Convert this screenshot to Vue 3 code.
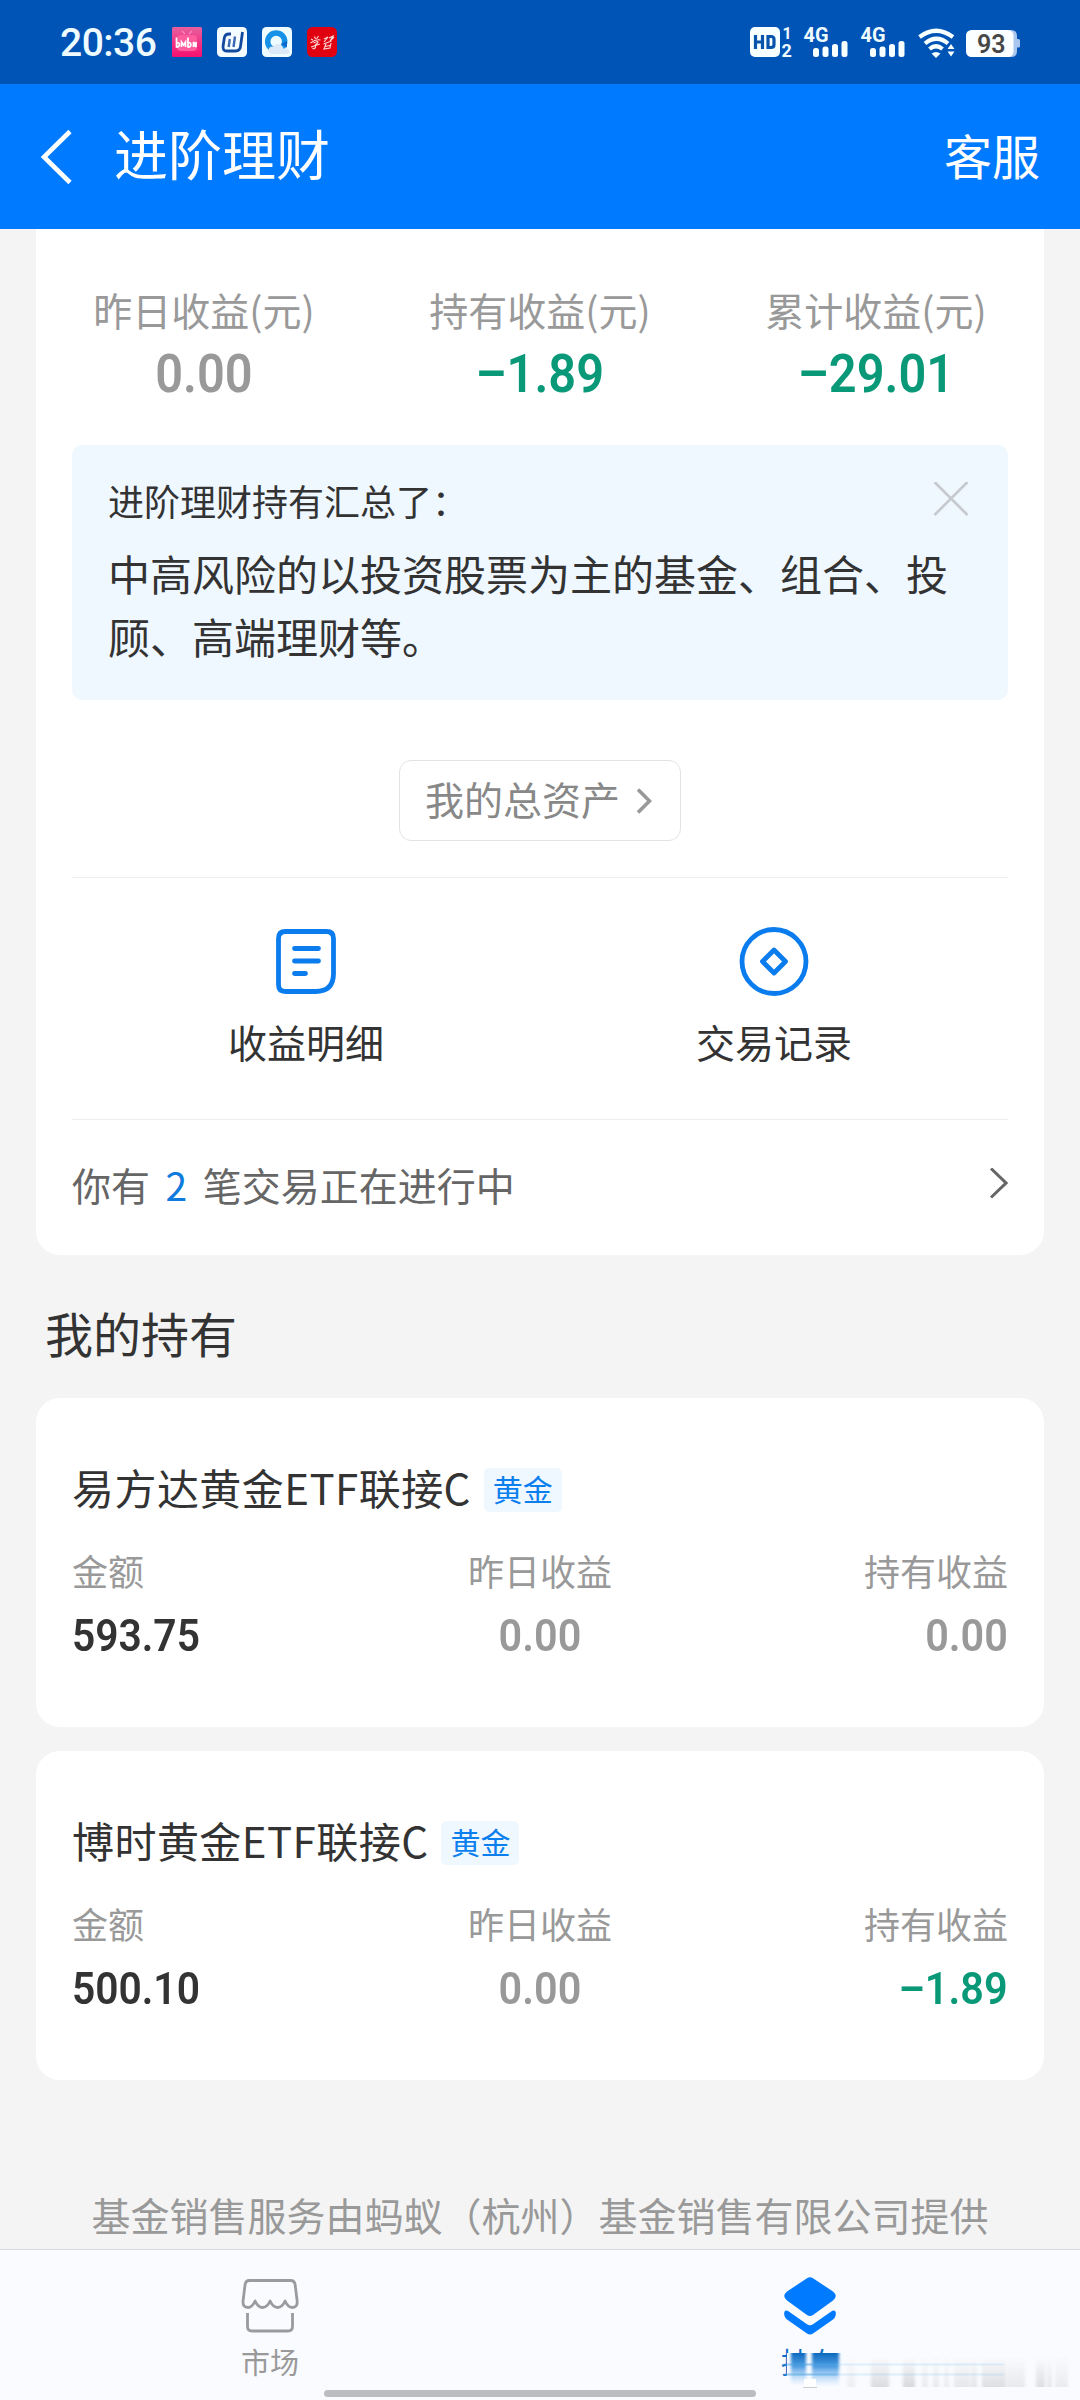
<script setup>
const stats = [
  { label: '昨日收益(元)', value: '0.00', tone: 'flat' },
  { label: '持有收益(元)', value: '–1.89', tone: 'down' },
  { label: '累计收益(元)', value: '–29.01', tone: 'down' },
]

const funds = [
  {
    name: '易方达黄金ETF联接C',
    tag: '黄金',
    cells: [
      { label: '金额', value: '593.75', tone: 'strong' },
      { label: '昨日收益', value: '0.00', tone: 'flat' },
      { label: '持有收益', value: '0.00', tone: 'flat' },
    ],
  },
  {
    name: '博时黄金ETF联接C',
    tag: '黄金',
    cells: [
      { label: '金额', value: '500.10', tone: 'strong' },
      { label: '昨日收益', value: '0.00', tone: 'flat' },
      { label: '持有收益', value: '–1.89', tone: 'down' },
    ],
  },
]

// Soft grey columns of the smudge: x, width, opacity
const smears = [
  [67, 8, 0.1], [91, 18, 0.24], [123, 12, 0.26], [142, 6, 0.12], [153, 6, 0.14],
  [164, 5, 0.12], [174, 16, 0.15], [191, 6, 0.17], [202, 24, 0.22], [227, 18, 0.14],
  [256, 9, 0.22], [267, 5, 0.16], [275, 13, 0.12],
]
</script>

<template>
  <div class="page">
    <div class="status">
      <span class="clock">20:36</span>
      <div class="apps">
        <svg width="30" height="30" viewBox="0 0 30 30">
          <defs>
            <linearGradient id="pink" x1="0" y1="0" x2="0" y2="1">
              <stop offset="0" stop-color="#e85f9e" /><stop offset="1" stop-color="#f5106f" />
            </linearGradient>
          </defs>
          <rect width="30" height="30" rx="1.500" fill="url(#pink)" />
          <path d="M10 4l3 3M20 4l-3 3" stroke="#ff86b8" stroke-width="1.400" />
          <rect x="5" y="8" width="20" height="16" rx="4" fill="#ff5c9d" />
          <path d="M4.500 10.500v9.500c3.500 .5 4-4.500 .5-4.500M9.500 20v-5l2 3 2-3v5M16 10.500v9.500c3.500 .5 4-4.500 .5-4.500M21.500 20v-5l2.500 5v-5" fill="none" stroke="#fff" stroke-width="1.700" />
        </svg>
        <svg width="30" height="30" viewBox="0 0 30 30">
          <rect width="30" height="30" rx="4.500" fill="#f4fcff" />
          <path d="M14 7h-2q-4 0-4.700 4l-1.200 8q-.6 5 3.500 5h9q4.200 0 4.900-4.500l2-14.500" fill="none" stroke="#134a9e" stroke-width="2.800" />
          <path d="M12.800 12l-1.100 8M18 9.500l-1.500 10.500" stroke="#3a68b4" stroke-width="2.400" />
        </svg>
        <svg width="30" height="30" viewBox="0 0 30 30">
          <rect width="30" height="30" rx="4.500" fill="#effcff" />
          <circle cx="14.200" cy="14.500" r="8.500" fill="none" stroke="#1592e6" stroke-width="5.500" />
          <path d="M19 17l6-3v6.500z" fill="#0868cc" />
          <path d="M10 27q-4-1-3.500-4.500 1-3.500 5-3 3-4.500 7.500-1.500 2 1.500 2.500 3.500 5-.5 6 3 0 2.500-3 2.500z" fill="#dce9f7" />
        </svg>
        <svg width="30" height="30" viewBox="0 0 30 30">
          <rect width="30" height="30" rx="5.500" fill="#e00010" />
          <path d="M4 12l2 1M7.500 9.500l1 2.500M11.500 9l-2 3M3.500 16q5-4 10-3M6.500 16q6-3 4 0-3 2-2 4-1 3-3 1M4 20l9-3M17 12l4-2-4 5M22 11l4-2-3 5 4-4M16.500 17l8-3M19 17l-2 5 6-1 1-5M18 19.500l5-1" fill="none" stroke="#ffd9d5" stroke-width="1.100" />
        </svg>
      </div>
      <svg class="signals" width="272" height="52" viewBox="748 16 272 52">
        <rect x="750" y="27" width="30" height="30" rx="5" fill="#f8ffff" />
        <path d="M755.500 35v14M762.500 35v14M756 42h6.500M768 36.500v11h3q3 0 3-3v-5q0-3-3-3z" fill="none" stroke="#0854ac" stroke-width="3.200" />
        <g fill="#eefcff" class="mini">
          <text x="782.500" y="39" font-size="16">1</text>
          <text x="781.500" y="57" font-size="18">2</text>
          <text x="803.500" y="42" font-size="19.500" textLength="25" lengthAdjust="spacingAndGlyphs">4G</text>
          <text x="860.500" y="42" font-size="19.500" textLength="25" lengthAdjust="spacingAndGlyphs">4G</text>
        </g>
        <g v-for="o in [0, 57]" :key="o" fill="#f8ffff">
          <rect :x="813 + o" y="48" width="6" height="9" rx="2.500" />
          <rect :x="822.500 + o" y="46.500" width="6" height="10.500" rx="2.500" />
          <rect :x="832 + o" y="44" width="6" height="13" rx="2.500" />
          <rect :x="841.500 + o" y="41" width="6" height="16" rx="2.500" />
        </g>
        <path d="M919.500 37q16.500-12.500 33.500 0M925 43.500q11.500-9.500 23 0M929.500 49q6.500-5.500 13 0" fill="none" stroke="#f8ffff" stroke-width="4.200" />
        <path d="M931.500 53.500q4.500-3.200 9 0l-4.500 4.500z" fill="#f8ffff" />
        <path d="M951 44l3.500 5h-7zM951 56.500l3.500-5h-7z" fill="#f8ffff" />
        <path d="M1008 30h3q6 0 6 6v3h1.500q1.500 0 1.500 1.500v5.500q0 1.500-1.500 1.500h-1.500v3.500q0 6-6 6h-3z" fill="#a9c6ee" />
        <rect x="966" y="30" width="47.500" height="27" rx="5.500" fill="#fbffff" />
        <text class="level" x="977" y="52.500" font-size="25" fill="#474747">93</text>
      </svg>
    </div>

    <header class="nav">
      <svg class="back" width="34" height="60" viewBox="0 0 34 60">
        <path d="M32 4.500L6 30 32 55.500" fill="none" stroke="#fff" stroke-width="4.600" />
      </svg>
      <h1>进阶理财</h1>
      <span class="service">客服</span>
    </header>

    <section class="summary">
      <div class="stats">
        <div v-for="s in stats" :key="s.label" class="stat">
          <span class="label">{{ s.label }}</span>
          <span class="num" :class="s.tone">{{ s.value }}</span>
        </div>
      </div>

      <div class="notice">
        <div class="notice-head">
          <span>进阶理财持有汇总了：</span>
          <svg width="36" height="36" viewBox="0 0 36 36">
            <path d="M1.500 0l33 33M34.500 0l-33 33" stroke="#c6cacf" stroke-width="2.600" />
          </svg>
        </div>
        <p>中高风险的以投资股票为主的基金、组合、投顾、高端理财等。</p>
      </div>

      <div class="assets">
        <span>我的总资产</span>
        <svg width="16" height="26" viewBox="0 0 16 26">
          <path d="M2 1.500L13.500 13 2 24.500" fill="none" stroke="#999" stroke-width="3.600" />
        </svg>
      </div>

      <div class="shortcuts">
        <div class="shortcut">
          <svg width="72" height="72" viewBox="0 0 72 72">
            <g fill="none" stroke="#0a7cee" stroke-width="4.800">
              <path d="M15.500 5.500h41q7 0 7 7v35q0 18-18 18h-30q-7 0-7-7v-46q0-7 7-7z" />
              <path d="M24.500 22.500h24M24.500 35h24M24.500 47.500h11" stroke-linecap="round" />
            </g>
          </svg>
          <span>收益明细</span>
        </div>
        <div class="shortcut">
          <svg width="72" height="72" viewBox="0 0 72 72">
            <circle cx="36" cy="35.500" r="32" fill="none" stroke="#0a7cee" stroke-width="4.800" />
            <path d="M36 24L47.500 35.500 36 47 24.500 35.500z" fill="none" stroke="#0a7cee" stroke-width="4.800" stroke-linejoin="round" />
          </svg>
          <span>交易记录</span>
        </div>
      </div>

      <div class="pending">
        <span>你有<b>2</b>笔交易正在进行中</span>
        <svg width="19" height="32" viewBox="0 0 19 32">
          <path d="M2 0.500L17 15 2 29.500" fill="none" stroke="#666" stroke-width="3" />
        </svg>
      </div>
    </section>

    <h2>我的持有</h2>

    <section v-for="f in funds" :key="f.name" class="fund">
      <div class="fund-head">
        <h3>{{ f.name }}</h3>
        <span class="tag">{{ f.tag }}</span>
      </div>
      <div class="cells">
        <div v-for="c in f.cells" :key="c.label" class="cell">
          <span class="label">{{ c.label }}</span>
          <span class="num" :class="c.tone">{{ c.value }}</span>
        </div>
      </div>
    </section>

    <p class="provider">基金销售服务由蚂蚁（杭州）基金销售有限公司提供</p>

    <nav class="tabs">
      <div class="tab">
        <svg width="60" height="60" viewBox="0 0 60 60">
          <g fill="none" stroke="#999b9f" stroke-width="2.800" stroke-linejoin="round">
            <path d="M9.500 4.500h41q4 0 4.600 4l2 16q.8 7-5 7-4 0-7-6.500-3 6.500-7.500 6.500t-7.500-6.500q-3 6.500-7.500 6.500t-7.500-6.500q-3 6.500-7 6.500-5.800 0-5-7l2-16q.6-4 4.400-4z" />
            <path d="M7.500 37v13.500q0 4.500 4.500 4.500h36q4.500 0 4.500-4.500V37" />
          </g>
        </svg>
        <span>市场</span>
      </div>
      <div class="tab active">
        <svg width="60" height="60" viewBox="0 0 60 60">
          <g fill="#007aff">
            <path d="M27 2.200q3-2 6 0l20 13.300q5.500 4.500 0 9l-20 14.500q-3 2-6 0l-20-14.500q-5.500-4.500 0-9z" />
            <path d="M4.300 36q1.500-2.500 4.500-.5l18.200 12.700q3 2 6 0l18.200-12.700q3-2 4.500.5 .8 5-2.700 7.500l-20 14q-3 2-6 0l-20-14q-3.500-2.500-2.700-7.500z" />
          </g>
        </svg>
        <span>持有</span>
        <svg class="smudge" width="290" height="40" viewBox="0 0 290 40">
          <defs>
            <linearGradient id="fadeBlue" x1="0" y1="0" x2="0" y2="1">
              <stop offset="0" stop-color="#0c69bd" /><stop offset=".4" stop-color="#2f8bdc" stop-opacity=".85" />
              <stop offset="1" stop-color="#9ccdf5" stop-opacity="0" />
            </linearGradient>
            <linearGradient id="fadeGrey" x1="0" y1="0" x2="0" y2="1">
              <stop offset="0" stop-color="#777" stop-opacity="0" /><stop offset="1" stop-color="#777" />
            </linearGradient>
            <filter id="soft" x="-10%" y="-10%" width="120%" height="120%"><feGaussianBlur stdDeviation="1.600 0.500" /></filter>
          </defs>
          <rect x="7" y="4" width="54" height="36" fill="#fafbff" />
          <g filter="url(#soft)">
            <rect x="11" y="4" width="15" height="33" fill="url(#fadeBlue)" />
            <rect x="32" y="4" width="27" height="34" fill="url(#fadeBlue)" />
            <rect v-for="s in smears" :key="s[0]" :x="s[0]" y="8" :width="s[1]" height="30" fill="url(#fadeGrey)" :opacity="s[2]" />
            <path d="M4 15.500h220M4 25.500h220" stroke="#7cc4ee" stroke-opacity=".22" stroke-width="2" />
            <path d="M4 15.500h54M4 25.500h54" stroke="#3f9ce0" stroke-opacity=".4" stroke-width="2" />
          </g>
          <rect x="24" y="30" width="12" height="8" fill="#fff" />
          <path d="M23 38.500h14" stroke="#ccc" stroke-width="1" />
        </svg>
      </div>
      <i class="home-bar"></i>
    </nav>
  </div>
</template>

<style>
body {
  background: #f4f4f4;
}
</style>

<style scoped>
.page {
  width: 1080px;
  height: 2400px;
  overflow: hidden;
  display: flex;
  flex-direction: column;
  background: #f4f4f4;
  color: #333;
  font-family: "Noto Sans CJK SC", sans-serif;
}
svg {
  display: block;
  flex: none;
}
h1, h2, h3, p {
  margin: 0;
  font-weight: 400;
}
.status {
  flex: none;
  height: 84px;
  display: flex;
  align-items: center;
  padding: 0 60px;
  background: #0054b6;
}
.clock {
  width: 112px;
  padding-top: 1px;
  font: 500 39px/40px Roboto, sans-serif;
  letter-spacing: -0.5px;
  color: #eefbff;
}
.apps {
  display: flex;
  gap: 15px;
}
.signals {
  margin-left: auto;
}
.mini {
  font-family: Roboto, sans-serif;
  font-weight: 700;
}
.level {
  font-family: Roboto, sans-serif;
  font-weight: 600;
}
.nav {
  flex: none;
  height: 145px;
  display: flex;
  align-items: center;
  padding: 0 40px 0 38px;
  background: #007aff;
  color: #fff;
}
h1 {
  margin-left: 42px;
  padding-bottom: 7px;
  font-size: 54px;
  line-height: 60px;
}
.service {
  margin-left: auto;
  padding-bottom: 5px;
  font-size: 48px;
  line-height: 60px;
}
.summary {
  flex: none;
  margin: 0 36px;
  padding: 53px 36px 0;
  background: #fff;
  border-radius: 0 0 24px 24px;
}
.stats {
  display: flex;
  margin: 0 -36px;
}
.stat {
  flex: 1;
  display: flex;
  flex-direction: column;
  align-items: center;
  gap: 8px;
}
.stat .label {
  font-size: 39px;
  line-height: 54px;
}
.label {
  color: #999;
}
.num {
  font-family: Roboto, sans-serif;
  font-weight: 600;
  transform: scaleX(.92);
}
.stat .num {
  font-size: 53px;
  line-height: 60px;
}
.flat {
  color: #999;
}
.down {
  color: #0a9978;
}
.strong {
  color: #333;
}
.notice {
  margin-top: 41px;
  padding: 28px 36px 33px;
  border-radius: 10px;
  background: #eff7ff;
}
.notice-head {
  display: flex;
  justify-content: space-between;
  align-items: center;
  font-size: 36px;
  line-height: 54px;
  padding-right: 3px;
}
.notice p {
  margin-top: 14px;
  font-size: 42px;
  line-height: 63px;
}
.assets {
  width: 282px;
  height: 81px;
  box-sizing: border-box;
  margin: 60px auto 36px;
  padding: 0 28px 0 25px;
  display: flex;
  align-items: center;
  justify-content: space-between;
  border: 1px solid #e3e3e3;
  border-radius: 12px;
  color: #888;
  font-size: 39px;
  line-height: 54px;
}
.assets span {
  padding-bottom: 5px;
}
.shortcuts {
  display: flex;
  padding: 48px 0 51px;
  border-top: 1px solid #eee;
  border-bottom: 1px solid #eee;
}
.shortcut {
  flex: 1;
  display: flex;
  flex-direction: column;
  align-items: center;
  gap: 16px;
  font-size: 39px;
  line-height: 54px;
}
.pending {
  height: 128px;
  padding-bottom: 7px;
  display: flex;
  align-items: center;
  justify-content: space-between;
  font-size: 39px;
  line-height: 54px;
  color: #666;
}
.pending b {
  margin: 0 15.500px;
  font-weight: 400;
  color: #0f7bdc;
}
h2 {
  flex: none;
  padding: 49px 45px 38px;
  font-size: 48px;
  line-height: 56px;
}
.fund {
  flex: none;
  box-sizing: border-box;
  height: 329px;
  margin: 0 36px;
  padding: 70px 36px 0;
  border-radius: 24px;
  background: #fff;
}
.fund + .fund {
  margin-top: 24px;
}
.fund-head {
  display: flex;
  align-items: center;
  height: 44px;
  gap: 13px;
}
h3 {
  font-size: 42px;
  line-height: 44px;
  letter-spacing: 0.450px;
  padding-bottom: 6px;
}
.tag {
  height: 44px;
  padding: 0 9px;
  border-radius: 5px;
  background: #eff7ff;
  color: #0b7fee;
  font-size: 30px;
  line-height: 41px;
}
.cells {
  display: flex;
  margin-top: 33px;
}
.cell {
  flex: 1;
  display: flex;
  flex-direction: column;
  align-items: center;
  gap: 15px;
}
.cell:first-child {
  align-items: flex-start;
}
.cell:last-child {
  align-items: flex-end;
}
.cell:first-child .num {
  transform-origin: left;
  transform: scaleX(.905);
}
.cell:last-child .num {
  transform-origin: right;
}
.cell .label {
  font-size: 36px;
  line-height: 50px;
}
.cell .num {
  font-size: 45px;
  line-height: 52px;
}
.provider {
  flex: none;
  margin-top: 107px;
  text-align: center;
  white-space: nowrap;
  color: #999;
  font-size: 39px;
  line-height: 54px;
}
.tabs {
  position: relative;
  flex: none;
  margin-top: auto;
  height: 151px;
  box-sizing: border-box;
  display: flex;
  border-top: 1px solid #d9dadd;
  background: #fafbff;
}
.tab {
  position: relative;
  flex: 1;
  display: flex;
  flex-direction: column;
  align-items: center;
  gap: 5px;
  padding-top: 26px;
  font-size: 29px;
  line-height: 40px;
  color: #999;
}
.active {
  color: #0a6fc8;
}
.smudge {
  position: absolute;
  left: 240px;
  top: 99px;
}
.home-bar {
  position: absolute;
  left: 324px;
  bottom: 3px;
  width: 432px;
  height: 7px;
  border-radius: 4px;
  background: #bcbdbf;
}
</style>
